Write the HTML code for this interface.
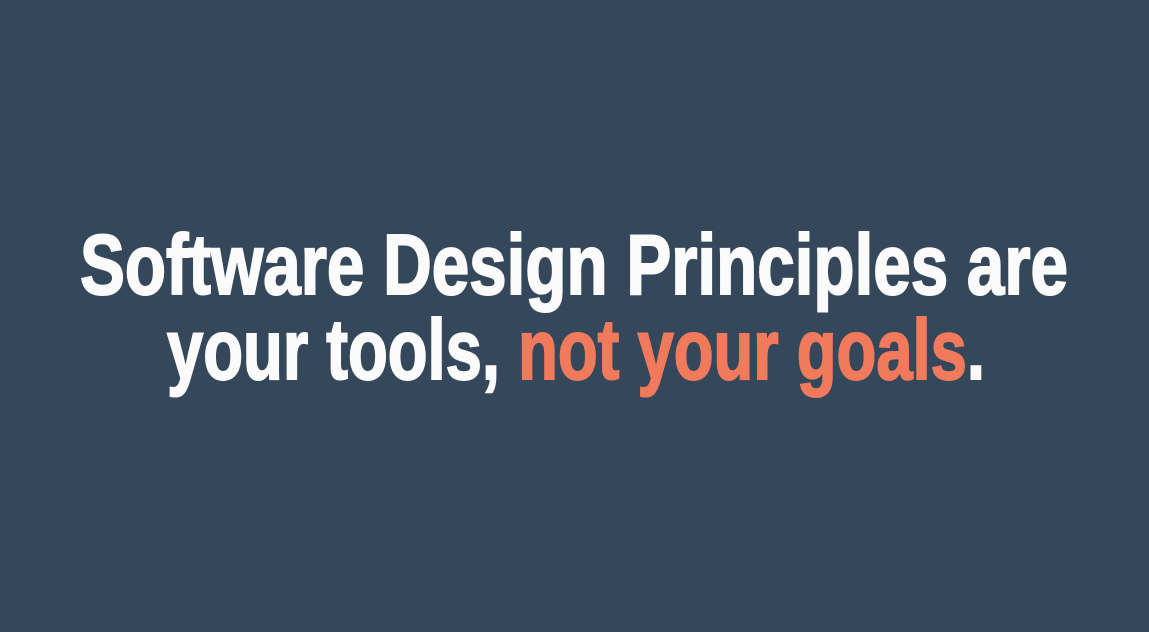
<!DOCTYPE html>
<html><head><meta charset="utf-8">
<style>
html,body{margin:0;padding:0;}
body{width:1149px;height:632px;background:#35475a;overflow:hidden;position:relative;}
.l{position:absolute;left:0;white-space:nowrap;font-family:"Liberation Sans",sans-serif;font-weight:bold;font-size:85px;line-height:85px;color:#fbfbfb;transform-origin:0 0;-webkit-text-stroke:2px currentColor;letter-spacing:0px;}
.o{color:#f07a5b;}
</style></head><body>
<div class="l" id="a" data-x="80" data-w="988" style="top:223px">Software Design Principles are</div>
<div class="l" id="b" data-x="167" data-w="818" style="top:308px">your tools, <span class="o">not your goals</span>.</div>
<script>
for(const id of ["a","b"]){const e=document.getElementById(id);const w=e.getBoundingClientRect().width;const t=+e.dataset.w;e.style.left=e.dataset.x+"px";e.style.transform="scaleX("+(t/w)+")";}
</script>
</body></html>
